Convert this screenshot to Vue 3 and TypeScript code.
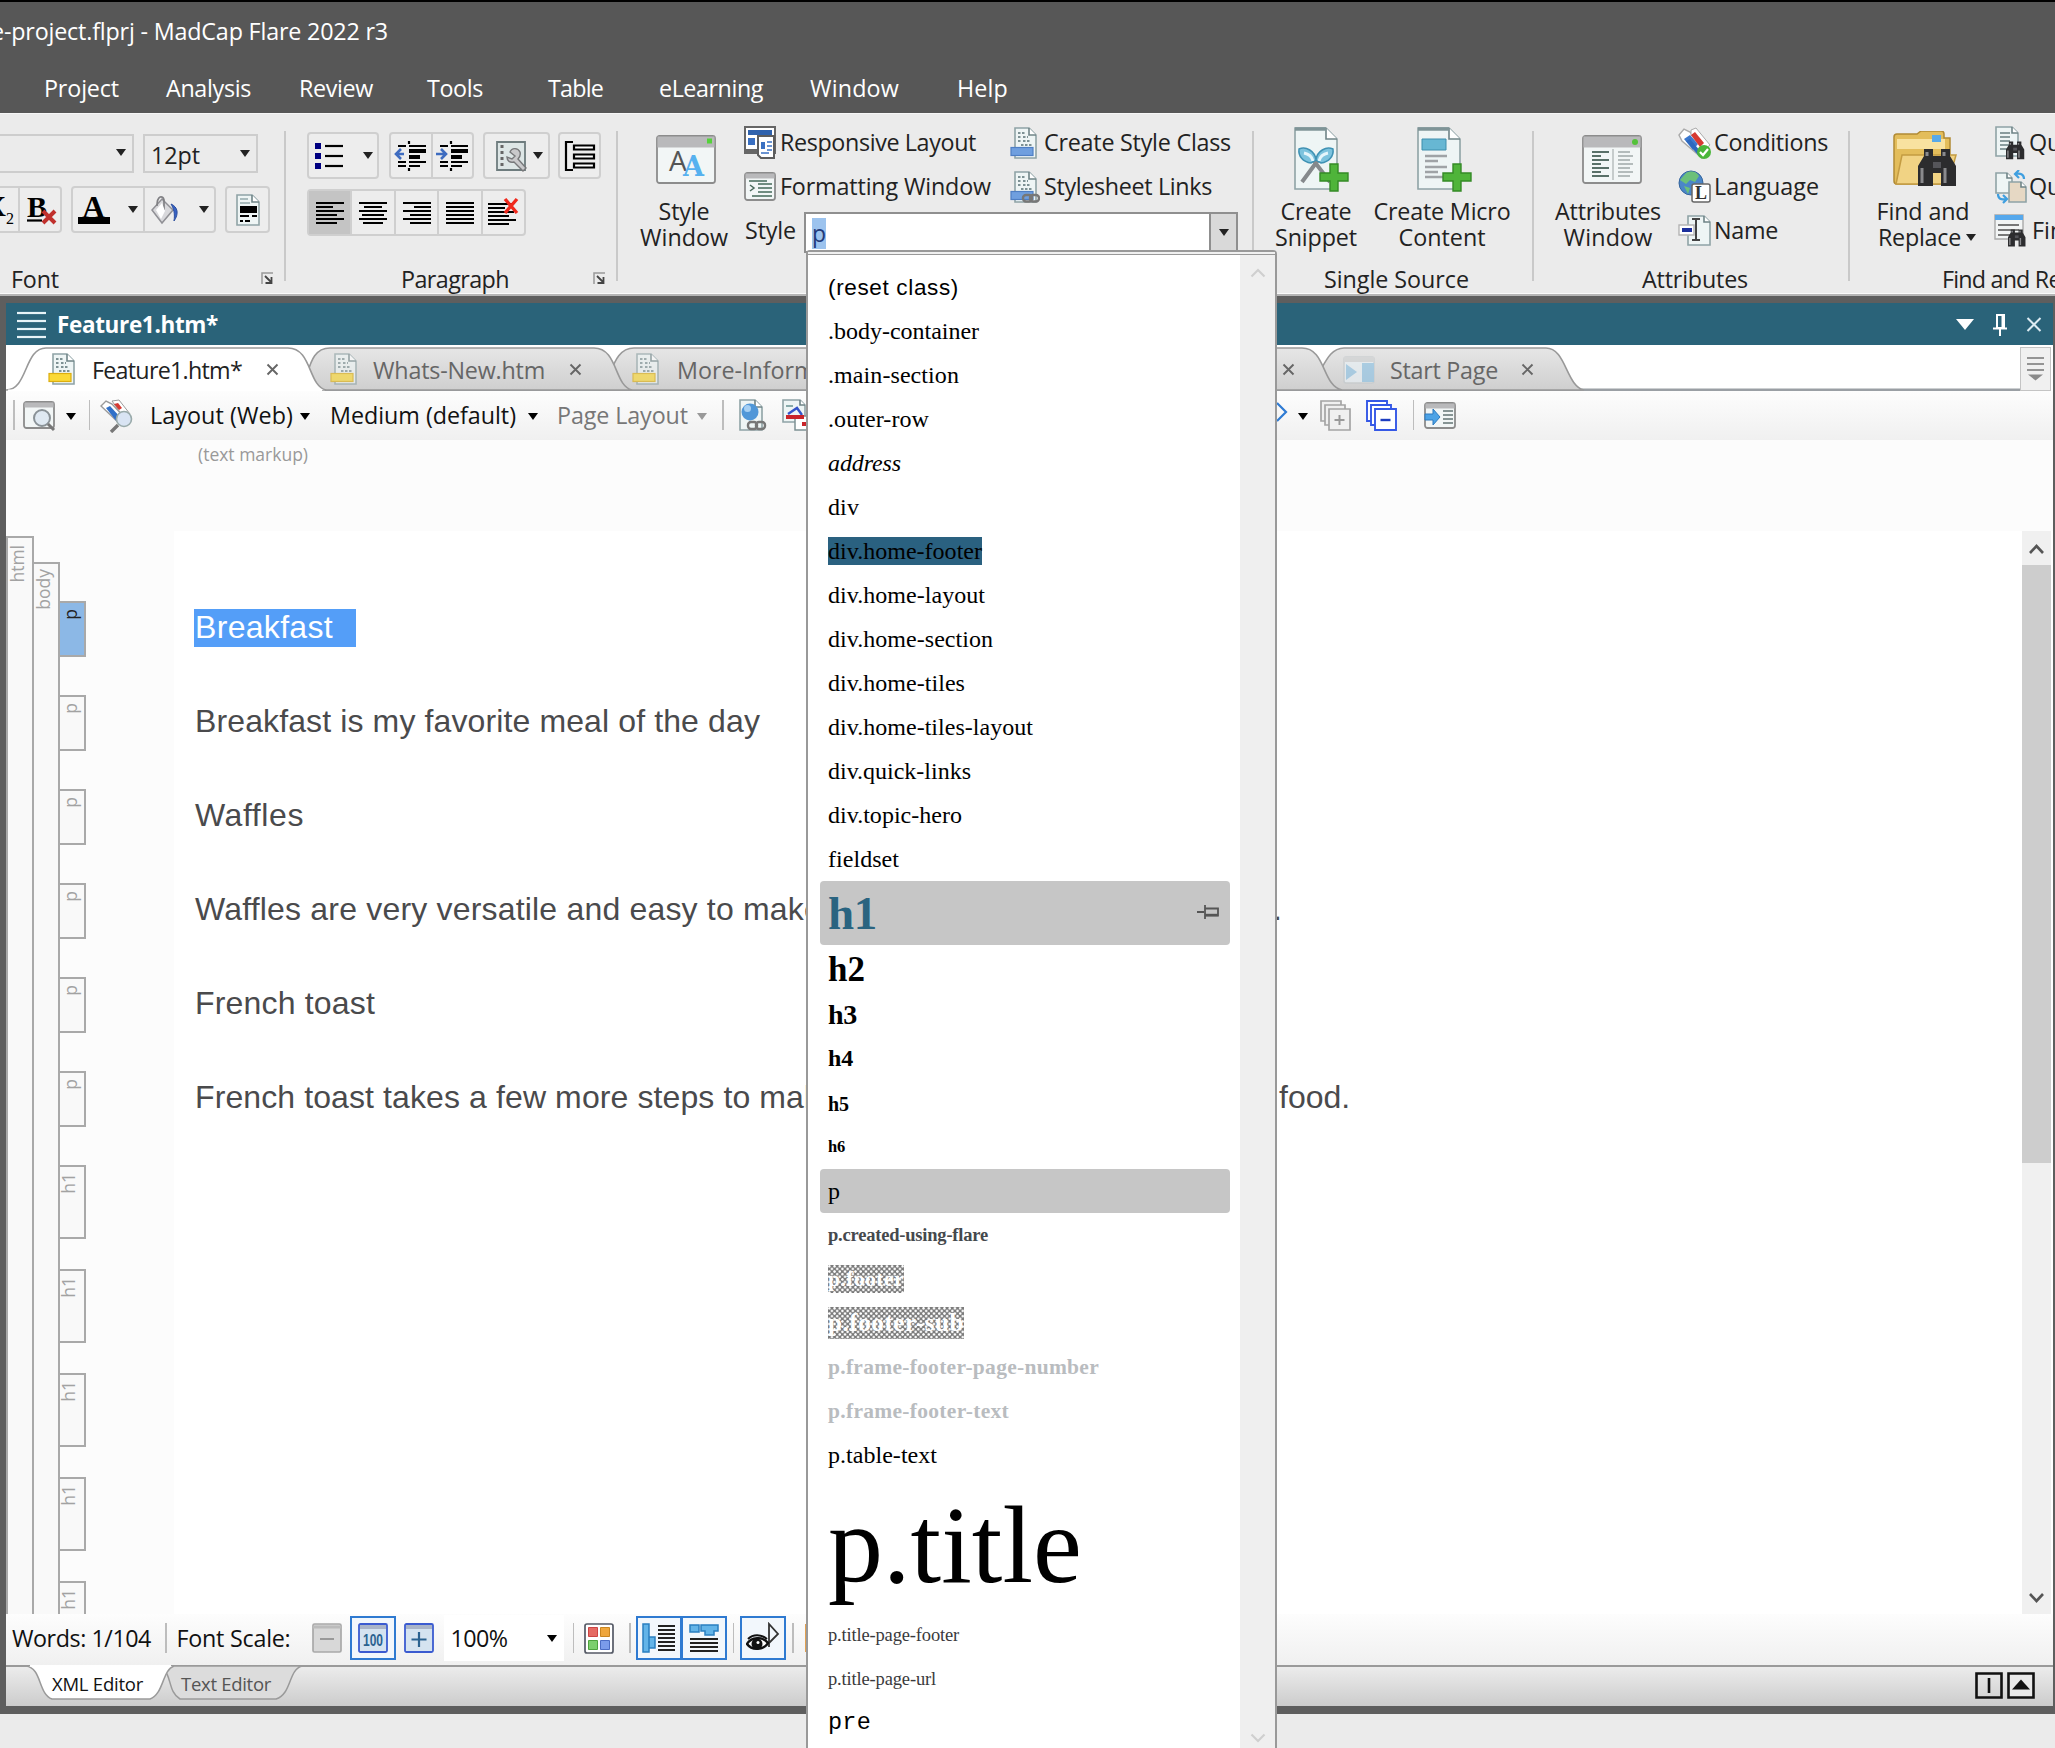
<script setup lang="ts">
import { h, type FunctionalComponent, type ObjectDirective } from 'vue'

type Glyph = { w: number; h: number; body: string }

const page = (x: number, y: number, w: number, ht: number, fold: number, fill = '#eef5f5') =>
  `<path d="M${x} ${y}h${w - fold}l${fold} ${fold}v${ht - fold}h${-w}z" fill="${fill}" stroke="#8fa3a6" stroke-width="1.6"/>` +
  `<path d="M${x + w - fold} ${y}v${fold}h${fold}" fill="#fff" stroke="#6f8487" stroke-width="1.6"/>`

const lines = (x: number, w: number, ys: number[], color: string, sw = 2) =>
  ys.map((y) => `<path d="M${x} ${y}h${w}" stroke="${color}" stroke-width="${sw}"/>`).join('')

const sheet = (band: string, edge: string) =>
  page(5, 1, 21, 30, 7) +
  `<path d="M8 6h8M8 10h3M13 10h5M8 14h3M13 14h8M11 18h11" stroke="#7d9194" stroke-width="1.8" stroke-dasharray="2.5 1.5"/>` +
  `<rect x="1" y="20.500" width="22" height="8" fill="${band}" stroke="${edge}" stroke-width="1.2"/>`

const win = (w: number, ht: number, bar: number) =>
  `<rect x="1" y="1" width="${w - 2}" height="${ht - 2}" rx="2.500" fill="#f2f6f6" stroke="#8c8c8c" stroke-width="1.8"/>` +
  `<rect x="1.500" y="1.500" width="${w - 3}" height="${bar}" fill="#b9b9bb"/>`

const binoculars = (x: number, y: number, s: number) =>
  `<g transform="translate(${x} ${y}) scale(${s})"><path d="M6 3h9v7h8V3h9v7l6 10v20H23V27h-8v13H0V20l6-10z" fill="#2c2c2e"/><path d="M4 22v15M27 22v15M9 6v4M26 6v4" stroke="#8a8a8d" stroke-width="3"/><path d="M15 16h8v6h-8z" fill="#55555a"/></g>`

const plus = (x: number, y: number) =>
  `<path transform="translate(${x} ${y})" d="M10 1h8v9h10v8H18v10h-8V18H0v-8h10z" fill="#4fb43a" stroke="#348a26" stroke-width="1.4"/>`

const bars = (rows: number[][]) =>
  rows.map(([x, w], i) => `<path d="M${x} ${2 + i * 4}h${w}" stroke="#000" stroke-width="2"/>`).join('')

const glyphs: Record<string, Glyph> = {
  sub: { w: 16, h: 34, body: `<text x="-15" y="23" font-family="Liberation Serif" font-weight="bold" font-size="29">X</text><text x="6" y="31" font-family="Liberation Serif" font-size="16">2</text>` },
  clear: { w: 30, h: 32, body: `<text x="0" y="23" font-family="Liberation Serif" font-weight="bold" font-size="30">B</text><path d="M0 26.500h15" stroke="#000" stroke-width="2.200"/><path d="M16 17l12 12M28 17L16 29" stroke="#c0302c" stroke-width="4"/>` },
  fontColor: { w: 34, h: 32, body: `<text x="5" y="24" font-family="Liberation Serif" font-weight="bold" font-size="32">A</text><path d="M1 23h32v7H1z"/>` },
  bucket: { w: 30, h: 30, body: `<path d="M3 15L13 4l11 11-11 13z" fill="#d9d9dc" stroke="#909095" stroke-width="1.500"/><path d="M8 11c0-11 6-11 7-6v10" fill="none" stroke="#808084" stroke-width="1.700"/><path d="M22 9c7 3 8 10 3 17 1-7 0-12-3-17z" fill="#3762c4" stroke="#2c4f9e"/><path d="M7 15l6-7 3 8-4 8z" fill="#fff"/>` },
  fontDoc: { w: 26, h: 34, body: page(2, 2, 22, 30, 7) + `<path d="M5 13h17v7H5z"/><path d="M5 6h8M5 10h10" stroke="#aabcbe" stroke-width="2"/><path d="M5 23h9M17 23h5M5 28h3M10 28h5" stroke="#000" stroke-width="2"/>` },
  bullets: { w: 30, h: 28, body: [3, 13, 23].map((y) => `<path d="M1 ${y - 2}h6v6H1z" fill="#000080"/><path d="M11 ${y + 1}h18" stroke="#000" stroke-width="2.200"/>`).join('') },
  outdent: { w: 33, h: 32, body: `<path d="M4 6h8M15 6h17M15 22h17M4 22h8M4 26h8M15 26h11M15 1v3M15 28v3" stroke="#000" stroke-width="2.200"/><path d="M15 11h17M15 17h11" stroke="#000" stroke-width="4"/><path d="M10 14H3M7 9l-5 5 5 5" fill="none" stroke="#3e6cc0" stroke-width="2.600"/>` },
  indent: { w: 33, h: 32, body: `<path d="M4 6h8M15 6h17M15 22h17M4 22h8M4 26h8M15 26h11M15 1v3M15 28v3" stroke="#000" stroke-width="2.200"/><path d="M15 11h17M15 17h11" stroke="#000" stroke-width="4"/><path d="M0 14h9M5 9l5 5-5 5" fill="none" stroke="#3e6cc0" stroke-width="2.600"/>` },
  wrench: { w: 32, h: 32, body: `<path d="M2 2h28v28H2z" fill="#dde6e6" stroke="#6e7c7e" stroke-width="1.800"/><path d="M7 5v22" stroke="#666" stroke-width="3" stroke-dasharray="3 3"/><path d="M15 12c2-5 8-4 10 0 1 4-1 6-2 7l8 9-3 3-9-9c-4 1-7-1-7-5l5 2 3-3z" fill="#c9c9cb" stroke="#77787a" stroke-width="1.400"/>` },
  bracket: { w: 32, h: 32, body: `<path d="M9 2H2v28h7" fill="none" stroke="#000" stroke-width="2.200"/><path d="M10 5.500h20v4H10zM10 14.500h20v4H10zM10 23.500h20v4H10z" fill="#fff" stroke="#000" stroke-width="2.200"/>` },
  alignLeft: { w: 30, h: 24, body: bars([[1, 28], [1, 17], [1, 28], [1, 21], [1, 28], [1, 21]]) },
  alignCenter: { w: 30, h: 24, body: bars([[1, 28], [6, 18], [1, 28], [4, 22], [1, 28], [5, 20]]) },
  alignRight: { w: 30, h: 24, body: bars([[1, 28], [12, 17], [1, 28], [8, 21], [1, 28], [8, 21]]) },
  justify: { w: 30, h: 24, body: bars([[1, 28], [1, 28], [1, 28], [1, 28], [1, 28], [1, 28]]) },
  alignClear: { w: 32, h: 32, body: `<g transform="translate(0 5)">${bars([[1, 26], [1, 17], [1, 26], [1, 21], [1, 28], [1, 21]])}</g><path d="M18 2l12 14M30 2L18 16" stroke="#f0281c" stroke-width="3.400"/>` },
  launcher: { w: 13, h: 13, body: `<path d="M1 12V1h11" fill="none" stroke="#999" stroke-width="1.500"/><path d="M4 4l6 6M10.500 5v6H4.500" fill="none" stroke="#444" stroke-width="1.800"/>` },
  styleWindow: { w: 60, h: 50, body: win(60, 49, 11) + `<path d="M51 3.500h5v5h-5z" fill="#54d23a"/><text x="13" y="36" font-family="Open Sans" font-size="28" fill="#555">A</text><text x="27" y="41" font-family="DejaVu Serif" font-weight="bold" font-size="27" fill="#56b1ef">A</text>` },
  responsive: { w: 32, h: 34, body: `<path d="M1 1h30v26H1z" fill="#fff" stroke="#666" stroke-width="2"/><path d="M4 4h24v5H4z" fill="#2f62ad"/><path d="M4 12h7v7H4z" fill="#3a70c2"/><path d="M1 23h12v5H1z" fill="#666"/><path d="M14 10h16v22H17l-3-3z" fill="#fff" stroke="#5d5d5d" stroke-width="2"/><path d="M17 16h4v7h-4z" fill="#3a70c2"/><path d="M23 16h5M23 20h5M23 24h5M17 27h8" stroke="#3a70c2" stroke-width="1.600"/>` },
  formatting: { w: 32, h: 30, body: win(32, 29, 5) + lines(14, 14, [12, 16, 20], '#6f8c80') + `<path d="M5 9h18M8 24h20" stroke="#6f8c80" stroke-width="2"/><path d="M6 13l4 3-4 3" fill="none" stroke="#4a6a5c" stroke-width="1.500"/>` },
  styleClass: { w: 29, h: 33, body: sheet('#6f9fdf', '#4f7fc4') },
  styleLinks: { w: 30, h: 33, body: sheet('#6f9fdf', '#4f7fc4') + `<g fill="none" stroke="#777" stroke-width="2.400"><rect x="13" y="24" width="9" height="6.500" rx="3"/><rect x="20" y="24" width="9" height="6.500" rx="3"/></g>` },
  snippet: { w: 56, h: 66, body: page(2, 1, 42, 61, 11) + `<path d="M2 2h31" stroke="#7f9497" stroke-width="3.500"/><path d="M9 55L31 25M37 55L14 25" stroke="#85898c" stroke-width="4"/><path d="M6 22c7-3 16 2 17 11l-5 3c-8-1-13-7-12-14zM40 22c-7-3-16 2-17 11l5 3c8-1 13-7 12-14z" fill="#7cc3de" stroke="#3f92b4" stroke-width="1.500"/><path d="M11 26c5 1 8 4 9 8M35 26c-5 1-8 4-9 8" stroke="#e4f5fb" stroke-width="3" fill="none"/>` + plus(27, 36) },
  micro: { w: 56, h: 66, body: page(2, 1, 42, 61, 11) + `<path d="M2 2h31" stroke="#7f9497" stroke-width="3.500"/><path d="M6 12h24v11H6z" fill="#67b7d3" stroke="#3e8eac"/>` + lines(9, 22, [29, 40, 50], '#9fa3a6', 2.5) + lines(9, 13, [34, 45], '#9fa3a6', 2.5) + plus(27, 36) },
  attributes: { w: 60, h: 50, body: win(60, 49, 11) + `<circle cx="53" cy="7" r="3" fill="#54c23a"/><path d="M31 14v31" stroke="#c6cccc" stroke-width="2"/>` + lines(10, 17, [17, 25, 33, 41], '#597068') + lines(10, 9, [21, 29, 37], '#597068') + lines(36, 12, [17, 25, 33, 41], '#b4bcbc') + lines(36, 15, [21, 29, 37], '#b4bcbc') },
  conditions: { w: 34, h: 33, body: `<path d="M1 8l5-6 6 3 18 20-6 6L4 14z" fill="#fff" stroke="#aaa" stroke-width="1.400"/><path d="M6 12l6-4 8 9-5 6z" fill="#3b78cf"/><path d="M13 3l5-2 14 17-6 5-13-15z" fill="#fff" stroke="#aaa"/><path d="M17 5l9 11-4 4-9-12z" fill="#d63a32"/><path d="M8 14l12 14 3-3L12 12z" fill="#2e68bd"/><circle cx="26" cy="25" r="7" fill="#4ab53a"/><path d="M22 25l3 3 5-6" fill="none" stroke="#fff" stroke-width="2.200"/>` },
  language: { w: 34, h: 34, body: `<circle cx="13" cy="13" r="12" fill="#4a86c8" stroke="#35659d"/><path d="M8 3c6-3 11-1 13 3l-4 6-5-2-4 4-6-4z" fill="#6cc07a"/><path d="M6 16l6 2-2 6z" fill="#6cc07a"/><rect x="14" y="14" width="18" height="18" rx="2" fill="#fff" stroke="#666" stroke-width="1.500"/><text x="17" y="29" font-family="Liberation Serif" font-size="18" font-weight="bold" fill="#333">L</text>` },
  name: { w: 34, h: 34, body: page(10, 2, 22, 29, 6) + `<path d="M1 11h15v10H1z" fill="#fff" stroke="#b5b5b5" stroke-width="1.400"/><path d="M4 14h10v4H4z" fill="#1c2f9c"/><path d="M14 5h8M14 26h8M18 5v21" stroke="#444" stroke-width="2"/>` },
  find: { w: 68, h: 58, body: `<path d="M2 6q0-3 3-3h20l4-3h20q3 0 3 3v4h6v46H5q-3 0-3-3z" fill="#e3bd5b" stroke="#b18a34" stroke-width="1.500"/><path d="M5 8h48v10H5z" fill="#f8e2a0"/><path d="M40 4h9v7h-9z" fill="#58a9e8"/><path d="M10 24h54l-8 29H4z" fill="#f1d384" stroke="#c49c42" stroke-width="1.500"/>` + binoculars(26, 15, 1) },
  quickDoc: { w: 32, h: 34, body: page(2, 1, 22, 29, 6) + lines(6, 10, [7, 11, 15, 19, 23], '#8a9c9e') + binoculars(12, 14, 0.48) },
  quickSwap: { w: 34, h: 34, body: page(2, 3, 16, 20, 5) + page(15, 12, 17, 20, 5, '#e6d8c4') + `<path d="M30 9c0-5-4-6-8-5M25 0l-4 4 4 4M4 24c0 5 3 6 8 5M9 25l4 4-4 4" fill="none" stroke="#3f9fe0" stroke-width="2.200"/>` },
  findList: { w: 34, h: 34, body: `<path d="M1 1h28v24H1z" fill="#f2f4f4" stroke="#a9a9a9" stroke-width="1.400"/><path d="M1 1h28v5H1z" fill="#56a8ec"/>` + lines(4, 21, [11, 16, 21], '#777') + binoculars(14, 14, 0.46) },
  htm: { w: 28, h: 33, body: sheet('#fbd936', '#dcae10') },
  startPage: { w: 32, h: 28, body: `<rect x="1" y="1" width="30" height="26" rx="2" fill="#e9f1f6" stroke="#c3c9cc" stroke-width="1.500"/><path d="M1 1h30v5H1z" fill="#cfd1d2"/><path d="M19 7h12v19H19zM3 8v16l11-8z" fill="#8fc3e4"/>` },
  preview: { w: 33, h: 31, body: win(32, 28, 5) + `<circle cx="19" cy="17" r="8" fill="#dfe9f2" stroke="#8a9297" stroke-width="2"/><path d="M25 23l6 6" stroke="#777" stroke-width="3"/>` },
  tagFind: { w: 34, h: 34, body: `<path d="M1 7l5-5 6 3 14 15-5 6z" fill="#fff" stroke="#9a9a9a" stroke-width="1.400"/><path d="M12 2l7-1 11 14-5 5z" fill="#fff" stroke="#9a9a9a"/><path d="M6 9l4-2 11 12-4 4z" fill="#3070c8"/><path d="M14 5l5 6 3-2-4-5z" fill="#d63a32"/><circle cx="24" cy="20" r="7.500" fill="#d9e4f3" stroke="#9aa" stroke-width="1.600"/><path d="M18 26l-7 7" stroke="#777" stroke-width="3.400"/>` },
  linkGlobe: { w: 29, h: 33, body: page(2, 1, 22, 30, 7) + `<circle cx="12" cy="13" r="8.500" fill="#4f97d8"/><circle cx="9.500" cy="9.500" r="3.500" fill="#a6d0f3"/><g fill="none" stroke="#777" stroke-width="2.400"><rect x="10" y="23" width="9" height="7" rx="3"/><rect x="18" y="23" width="9" height="7" rx="3"/></g>` },
  redline: { w: 30, h: 33, body: page(2, 1, 22, 22, 5) + `<path d="M14 17h18v14H14z" fill="#fff" stroke="#7e9194" stroke-width="1.500"/><path d="M5 7h7" stroke="#8aa" stroke-width="2"/><path d="M7 15l9-6 5 7" fill="none" stroke="#3353c8" stroke-width="2.400"/><path d="M5 16h18v4H5zM21 23h6v4h-6z" fill="#c9242a"/>` },
  tagEnd: { w: 12, h: 20, body: `<path d="M1 1l9 9-9 9" fill="none" stroke="#2f7bd3" stroke-width="2.200"/>` },
  expand: { w: 32, h: 32, body: `<g fill="#f0f0f0" stroke="#a4a4a4" stroke-width="1.700"><path d="M1 1h20v20H1z"/><path d="M5 5h20v20H5z"/><path d="M9 9h21v21H9z"/></g><path d="M14.500 20h10M19.500 15v10" stroke="#999" stroke-width="2"/>` },
  collapse: { w: 32, h: 32, body: `<g fill="#fff" stroke="#3558e6" stroke-width="1.900"><path d="M1 1h20v20H1z"/><path d="M5 5h20v20H5z"/><path d="M9 9h21v21H9z"/></g><path d="M14.500 20h10" stroke="#1d3dc0" stroke-width="2.400"/>` },
  insert: { w: 33, h: 28, body: win(32, 27, 5) + lines(19, 10, [9, 13, 17, 21], '#7a8a8a', 1.8) + `<path d="M1 12h8V7l7 8-7 8v-5H1z" fill="#4da3e6" stroke="#2c7bc0"/>` },
  menu: { w: 30, h: 28, body: lines(0, 29, [2, 10, 18, 26], '#e8f4f8', 2.2) },
  pinUp: { w: 14, h: 22, body: `<path d="M4 1h7v13H4zM0 14.500h14M7 15v7" fill="none" stroke="#fff" stroke-width="2"/><path d="M9.500 1v13" stroke="#fff" stroke-width="2"/>` },
  pinSide: { w: 22, h: 16, body: `<path d="M0 8h7M8 1v14M8 4.500h13v7H8" fill="none" stroke="#555" stroke-width="1.800"/><path d="M8 11h13" stroke="#555" stroke-width="2.400"/>` },
  winClose: { w: 16, h: 15, body: `<path d="M1.500 1l13 13M14.500 1l-13 13" stroke="#dcebf2" stroke-width="2"/>` },
  close: { w: 13, h: 13, body: `<path d="M1.500 1.500l10 10M11.500 1.500l-10 10" stroke="#666" stroke-width="1.900"/>` },
  winArrow: { w: 18, h: 11, body: `<path d="M0 0h18l-9 11z" fill="#fff"/>` },
  tabMenu: { w: 18, h: 26, body: lines(0, 17, [2, 8, 14], '#8a8a8a', 1.8) + `<path d="M1 18.500h15l-7.500 6z" fill="#8a8a8a"/>` },
  scaleDown: { w: 30, h: 30, body: `<rect x="1" y="1" width="28" height="28" rx="1.500" fill="#d8d8d8" stroke="#a9a9a9" stroke-width="1.700"/><path d="M1 4h28" stroke="#bbb" stroke-width="3"/><path d="M8 16h14" stroke="#999" stroke-width="2"/>` },
  scale100: { w: 30, h: 30, body: `<rect x="1" y="1" width="28" height="28" rx="1.500" fill="#d5e3f0" stroke="#3b5bd0" stroke-width="1.800"/><path d="M2 4h26" stroke="#a9b4c8" stroke-width="4"/><text x="5" y="23" font-family="Liberation Sans" font-weight="bold" font-size="16" textLength="20" lengthAdjust="spacingAndGlyphs" fill="#2b6290">100</text>` },
  scaleUp: { w: 30, h: 30, body: `<rect x="1" y="1" width="28" height="28" rx="1.500" fill="#d5e3f0" stroke="#3b5bd0" stroke-width="1.800"/><path d="M2 4h26" stroke="#a9b4c8" stroke-width="4"/><path d="M7.500 16.500h15M15 9v15" stroke="#2b6290" stroke-width="2.200"/>` },
  palette: { w: 30, h: 31, body: `<rect x="1" y="1" width="28" height="29" rx="2" fill="#fff" stroke="#555a66" stroke-width="1.700"/><path d="M4.500 4.500h9v9h-9z" fill="#e56a63" stroke="#c44"/><path d="M16.500 4.500h9v9h-9z" fill="#efa63c" stroke="#c98520"/><path d="M4.500 17.500h9v9h-9z" fill="#7ccf6c" stroke="#4da33c"/><path d="M16.500 17.500h9v9h-9z" fill="#7a9bea" stroke="#4a6cc4"/>` },
  blockBars: { w: 33, h: 30, body: `<path d="M1 1h6v28H1zM7 14h6v11H7z" fill="#63b4e8" stroke="#2a7fc0" stroke-width="1.500"/>` + lines(16, 17, [3, 7, 11, 15, 19, 23, 27], '#222', 2) },
  spanBars: { w: 30, h: 30, body: `<path d="M1 2h9v7H1zM12 2h17v6h-4v4h-9V8h-4z" fill="#63b4e8" stroke="#2a7fc0" stroke-width="1.500"/>` + lines(1, 28, [16, 20, 24, 28], '#222', 2) },
  markers: { w: 34, h: 32, body: `<path d="M23 25V2l9 10-9 9" fill="none" stroke="#333" stroke-width="1.800"/><path d="M1 22c4-7 16-8 21-1-4 7-16 8-21 1z" fill="#fff" stroke="#111" stroke-width="2.400"/><circle cx="11" cy="22" r="5.500" fill="#111"/><path d="M2 17c5-5 13-5 19 0" fill="none" stroke="#111" stroke-width="2"/><circle cx="12" cy="20.500" r="1.500" fill="#fff"/>` },
  split: { w: 28, h: 27, body: `<path d="M1.500 1.500h25v24h-25z" fill="none" stroke="#111" stroke-width="2.600"/><path d="M14 6v15" stroke="#111" stroke-width="2.600"/>` },
  raise: { w: 28, h: 27, body: `<path d="M1.500 1.500h25v24h-25z" fill="#e8e8e8" stroke="#111" stroke-width="2.600"/><path d="M5 17.500l9-10 9 10z" fill="#111"/>` },
}

const Glyph: FunctionalComponent<{ name: string }> = (props) => {
  const g = glyphs[props.name]
  return h('svg', { width: g.w, height: g.h, viewBox: `0 0 ${g.w} ${g.h}`, style: 'flex:none;display:block', innerHTML: g.body })
}
Glyph.props = ['name']

/* Spaces the letters of a label so that it fills the given width. */
const vFit: ObjectDirective<HTMLElement, number> = {
  mounted(el, { value }) {
    const count = (el.textContent ?? '').length
    el.style.letterSpacing = `${(value - el.getBoundingClientRect().width) / count}px`
  },
}

const menus = [
  { label: 'Project', width: 75, gap: 44 },
  { label: 'Analysis', width: 85, gap: 47 },
  { label: 'Review', width: 74, gap: 48 },
  { label: 'Tools', width: 56, gap: 54 },
  { label: 'Table', width: 55, gap: 65 },
  { label: 'eLearning', width: 104, gap: 56 },
  { label: 'Window', width: 89, gap: 47 },
  { label: 'Help', width: 51, gap: 58 },
]

const aligns = ['alignLeft', 'alignCenter', 'alignRight', 'justify', 'alignClear']

const tags = [
  ...[0, 1, 2, 3, 4, 5].map((i) => ({ label: 'p', height: 56, gap: i === 0 ? 161 : 38, on: i === 0 })),
  ...[0, 1, 2, 3, 4].map((i) => ({ label: 'h1', height: 74, gap: i === 0 ? 38 : 30, on: false })),
]

const paragraphs = [
  { text: 'Breakfast', width: 138, on: true },
  { text: 'Breakfast is my favorite meal of the day', width: 565 },
  { text: 'Waffles', width: 109 },
  { text: 'Waffles are very versatile and easy to make', width: 627, tail: '.' },
  { text: 'French toast', width: 180 },
  { text: 'French toast takes a few more steps to make', width: 643, tail: 'food.' },
]

type Style = { name: string; width: number; kind?: string; box?: boolean; pin?: boolean }
const styles: Style[] = [
  { name: '(reset class)', width: 131, kind: 'reset' },
  { name: '.body-container', width: 151 },
  { name: '.main-section', width: 131 },
  { name: '.outer-row', width: 101 },
  { name: 'address', width: 73, kind: 'italic' },
  { name: 'div', width: 31 },
  { name: 'div.home-footer', width: 154, kind: 'filled' },
  { name: 'div.home-layout', width: 157 },
  { name: 'div.home-section', width: 165 },
  { name: 'div.home-tiles', width: 137 },
  { name: 'div.home-tiles-layout', width: 205 },
  { name: 'div.quick-links', width: 143 },
  { name: 'div.topic-hero', width: 134 },
  { name: 'fieldset', width: 71 },
  { name: 'h1', width: 49, kind: 'h1', box: true, pin: true },
  { name: 'h2', width: 37, kind: 'h2' },
  { name: 'h3', width: 29, kind: 'h3' },
  { name: 'h4', width: 25, kind: 'h4' },
  { name: 'h5', width: 21, kind: 'h5' },
  { name: 'h6', width: 17, kind: 'h6' },
  { name: 'p', width: 12, box: true },
  { name: 'p.created-using-flare', width: 160, kind: 'created' },
  { name: 'p.footer', width: 76, kind: 'check' },
  { name: 'p.footer-sub', width: 136, kind: 'check large' },
  { name: 'p.frame-footer-page-number', width: 271, kind: 'faint' },
  { name: 'p.frame-footer-text', width: 181, kind: 'faint' },
  { name: 'p.table-text', width: 109 },
  { name: 'p.title', width: 254, kind: 'title' },
  { name: 'p.title-page-footer', width: 131, kind: 'small' },
  { name: 'p.title-page-url', width: 108, kind: 'small' },
  { name: 'pre', width: 43, kind: 'mono' },
]
</script>

<template>
  <div class="app">
    <header class="titlebar">
      <div class="caption"><span v-fit="397">e-project.flprj - MadCap Flare 2022 r3</span></div>
      <nav class="menus">
        <span v-for="m in menus" :key="m.label" :style="{ marginLeft: m.gap + 'px', width: m.width + 'px' }"><span v-fit="m.width">{{ m.label }}</span></span>
      </nav>
    </header>

    <section class="ribbon">
      <div class="group font">
        <div class="body">
          <div class="row">
            <div class="combo family"><i class="arrow"></i></div>
            <div class="combo size"><span v-fit="49">12pt</span><i class="arrow"></i></div>
          </div>
          <div class="row second">
            <div class="btns edge"><div class="cell k"><Glyph name="sub" /></div><div class="cell b"><Glyph name="clear" /></div></div>
            <div class="btns color"><div class="cell"><Glyph name="fontColor" /><i class="arrow"></i></div><div class="cell"><Glyph name="bucket" /><i class="arrow"></i></div></div>
            <div class="btns doc"><div class="cell"><Glyph name="fontDoc" /></div></div>
          </div>
        </div>
        <div class="label"><span v-fit="48">Font</span><Glyph name="launcher" /></div>
      </div>
      <i class="sep"></i>
      <div class="group para">
        <div class="body">
          <div class="row">
            <div class="btns list"><div class="cell"><Glyph name="bullets" /><i class="arrow"></i></div></div>
            <div class="btns dents"><div class="cell"><Glyph name="outdent" /></div><div class="cell"><Glyph name="indent" /></div></div>
            <div class="btns tool"><div class="cell"><Glyph name="wrench" /><i class="arrow"></i></div></div>
            <div class="btns brk"><div class="cell"><Glyph name="bracket" /></div></div>
          </div>
          <div class="row second">
            <div class="btns aligns"><div v-for="(a, i) in aligns" :key="a" class="cell" :class="{ on: i === 0 }"><Glyph :name="a" /></div></div>
          </div>
        </div>
        <div class="label"><span v-fit="108">Paragraph</span><Glyph name="launcher" /></div>
      </div>
      <i class="sep"></i>
      <div class="group styles">
        <div class="big"><div class="art"><Glyph name="styleWindow" /></div><span v-fit="51">Style</span><span v-fit="88">Window</span></div>
        <div class="side">
          <div class="line">
            <div class="item first"><i class="ico"><Glyph name="responsive" /></i><span v-fit="196">Responsive Layout</span></div>
            <div class="item"><i class="ico"><Glyph name="styleClass" /></i><span v-fit="187">Create Style Class</span></div>
          </div>
          <div class="line">
            <div class="item first"><i class="ico"><Glyph name="formatting" /></i><span v-fit="211">Formatting Window</span></div>
            <div class="item"><i class="ico"><Glyph name="styleLinks" /></i><span v-fit="168">Stylesheet Links</span></div>
          </div>
          <div class="line">
            <div class="stylelabel"><span v-fit="51">Style</span></div>
            <div class="stylebox"><mark>p</mark><b><i class="arrow"></i></b></div>
          </div>
        </div>
      </div>
      <i class="sep"></i>
      <div class="group single">
        <div class="body bigs">
          <div class="big one"><div class="art tall"><Glyph name="snippet" /></div><span v-fit="71">Create</span><span v-fit="82">Snippet</span></div>
          <div class="big two"><div class="art tall"><Glyph name="micro" /></div><span v-fit="137">Create Micro</span><span v-fit="87">Content</span></div>
        </div>
        <div class="label"><span v-fit="145">Single Source</span></div>
      </div>
      <i class="sep"></i>
      <div class="group attrs">
        <div class="body bigs">
          <div class="big"><div class="art shift"><Glyph name="attributes" /></div><span v-fit="106">Attributes</span><span v-fit="89">Window</span></div>
          <div class="side">
            <div class="item"><i class="ico"><Glyph name="conditions" /></i><span v-fit="114">Conditions</span></div>
            <div class="item"><i class="ico"><Glyph name="language" /></i><span v-fit="105">Language</span></div>
            <div class="item"><i class="ico"><Glyph name="name" /></i><span v-fit="64">Name</span></div>
          </div>
        </div>
        <div class="label"><span v-fit="106">Attributes</span></div>
      </div>
      <i class="sep"></i>
      <div class="group finds">
        <div class="body bigs">
          <div class="big"><div class="art folder"><Glyph name="find" /></div><span v-fit="93">Find and</span><div class="more"><span v-fit="83">Replace</span><i class="arrow"></i></div></div>
          <div class="side">
            <div class="item"><i class="ico"><Glyph name="quickDoc" /></i><span>Quick Find</span></div>
            <div class="item"><i class="ico"><Glyph name="quickSwap" /></i><span>Quick Replace</span></div>
            <div class="item"><i class="ico"><Glyph name="findList" /></i><span class="in">Find Results</span></div>
          </div>
        </div>
        <div class="label"><span v-fit="172">Find and Replace</span></div>
      </div>
    </section>

    <section class="frame">
      <div class="dochead">
        <Glyph name="menu" />
        <span v-fit="161">Feature1.htm*</span>
        <div class="winbtns"><Glyph name="winArrow" /><Glyph name="pinUp" /><Glyph name="winClose" /></div>
      </div>

      <div class="tabs">
        <svg class="shapes" width="2047" height="46" viewBox="6 345 2047 46">
          <defs><linearGradient id="tabfill" x1="0" y1="0" x2="0" y2="1"><stop offset="0" stop-color="#e6e6e6" /><stop offset="1" stop-color="#cfcfcf" /></linearGradient></defs>
          <path d="M325 390H2021" stroke="#9a9fa4" stroke-width="3" />
          <g fill="url(#tabfill)" stroke="#999" stroke-width="1.600">
            <path d="M1300 390C1322 386 1322 348 1344 348H1546C1566 348 1566 386 1584 390Z" />
            <path d="M860 390C880 386 880 348 900 348H1302C1326 348 1322 386 1342 390Z" />
            <path d="M600 390C612 380 612 348 634 348H900V390Z" />
            <path d="M300 390C310 376 308 348 330 348H594C618 348 614 386 632 390Z" />
          </g>
          <path d="M6 390C28 390 24 348 46 348H288C312 348 308 386 326 390" fill="#fff" stroke="#999" stroke-width="1.600" />
          <path d="M8 390.500H322" stroke="#fff" stroke-width="2" />
        </svg>
        <div class="tab t1"><Glyph name="htm" /><span v-fit="150">Feature1.htm*</span><Glyph name="close" /></div>
        <div class="tab t2"><Glyph name="htm" /><span v-fit="172">Whats-New.htm</span><Glyph name="close" /></div>
        <div class="tab t3"><Glyph name="htm" /><span v-fit="194">More-Information</span></div>
        <div class="tab t4"><Glyph name="close" /></div>
        <div class="tab t5"><Glyph name="startPage" /><span v-fit="108">Start Page</span><Glyph name="close" /></div>
        <div class="tabmenu"><Glyph name="tabMenu" /></div>
      </div>

      <div class="toolbar">
        <i class="bar first"></i>
        <Glyph name="preview" class="m-preview" /><i class="arrow"></i>
        <i class="bar m-bar2"></i>
        <Glyph name="tagFind" class="m-tag" />
        <span v-fit="143" class="m-layout">Layout (Web)</span><i class="arrow"></i>
        <span v-fit="186" class="m-medium">Medium (default)</span><i class="arrow"></i>
        <span v-fit="131" class="m-page">Page Layout</span><i class="arrow dim"></i>
        <i class="bar m-bar3"></i>
        <Glyph name="linkGlobe" class="m-globe" />
        <Glyph name="redline" class="m-red" />
        <div class="tools2">
          <Glyph name="tagEnd" /><i class="arrow"></i>
          <Glyph name="expand" class="m-expand" /><Glyph name="collapse" class="m-collapse" />
          <i class="bar m-bar4"></i>
          <Glyph name="insert" class="m-insert" />
        </div>
      </div>

      <div class="editor">
        <div class="rail html"><span>html</span></div>
        <div class="rail bodytag"><span>body</span></div>
        <div class="tags">
          <div v-for="(t, i) in tags" :key="i" class="tag" :class="{ on: t.on, head: t.label === 'h1' }" :style="{ height: t.height + 'px', marginTop: t.gap + 'px' }"><span>{{ t.label }}</span></div>
        </div>
        <div class="canvas">
          <div class="markup"><span v-fit="110">(text markup)</span></div>
          <div class="sheetrow">
            <div class="sheet">
              <p v-for="(p, i) in paragraphs" :key="i"><span class="copy" :class="{ on: p.on }"><span v-fit="p.width">{{ p.text }}</span></span><span v-if="p.tail" class="tail" :class="{ dot: p.tail === '.' }">{{ p.tail }}</span></p>
            </div>
            <div class="scroll">
              <svg width="17" height="12" viewBox="0 0 17 12"><path d="M2 10l6.500-7 6.500 7" fill="none" stroke="#555" stroke-width="2.600" /></svg>
              <div class="thumb"></div>
              <svg class="down" width="17" height="12" viewBox="0 0 17 12"><path d="M2 2l6.500 7 6.500-7" fill="none" stroke="#555" stroke-width="2.600" /></svg>
            </div>
          </div>
        </div>
      </div>

      <div class="status">
        <span v-fit="139" class="words">Words: 1/104</span>
        <i class="bar s1"></i>
        <span v-fit="114" class="scale">Font Scale:</span>
        <Glyph name="scaleDown" class="s-down" />
        <div class="toggle w100"><Glyph name="scale100" /></div>
        <Glyph name="scaleUp" class="s-up" />
        <div class="zoom"><span v-fit="57">100%</span><i class="arrow"></i></div>
        <i class="bar s2"></i>
        <Glyph name="palette" class="s-pal" />
        <i class="bar s3"></i>
        <div class="toggle s4"><Glyph name="blockBars" /></div>
        <div class="toggle s5"><Glyph name="spanBars" /></div>
        <i class="bar s6"></i>
        <div class="toggle s7"><Glyph name="markers" /></div>
        <i class="bar s8"></i>
        <i class="orange"></i>
      </div>

      <div class="modes">
        <svg class="shapes" width="320" height="41" viewBox="6 1665 320 41">
          <path d="M162 1666C172 1676 168 1692 180 1699H276C292 1694 288 1670 302 1666Z" fill="#dcdcdc" stroke="#9a9a9a" stroke-width="1.500" />
          <path d="M26 1666C42 1668 38 1694 52 1699H150C164 1694 162 1670 174 1666" fill="#fff" stroke="#9a9a9a" stroke-width="1.500" />
          <path d="M30 1665.500H171" stroke="#fff" stroke-width="2" />
        </svg>
        <span v-fit="91" class="xml">XML Editor</span>
        <span v-fit="90" class="text">Text Editor</span>
        <div class="corner"><Glyph name="split" /><Glyph name="raise" /></div>
      </div>
    </section>

    <div class="popup">
      <div class="lip"></div>
      <div class="inner">
        <ul>
          <li v-for="s in styles" :key="s.name" :class="[s.kind, { box: s.box }]"><span v-fit="s.width">{{ s.name }}</span><Glyph v-if="s.pin" name="pinSide" class="pin" /></li>
        </ul>
        <div class="rail2">
          <svg width="16" height="10" viewBox="0 0 16 10"><path d="M1.500 8.500L8 2l6.500 6.500" fill="none" stroke="#cfcfcf" stroke-width="2.200" /></svg>
          <svg width="16" height="10" viewBox="0 0 16 10"><path d="M1.500 1.500L8 8l6.500-6.500" fill="none" stroke="#cfcfcf" stroke-width="2.200" /></svg>
        </div>
      </div>
    </div>
  </div>
</template>

<style>
html, body { margin: 0; overflow: hidden; background: #ebebeb; }
</style>

<style scoped>
* { box-sizing: border-box; }
.app { position: relative; width: 2055px; height: 1748px; overflow: hidden; background: #ebebeb; font: 23.300px/26px "Open Sans", sans-serif; color: #222; }
span { white-space: nowrap; flex: none; }
i { font-style: normal; }
.arrow { flex: none; width: 0; height: 0; border: 5.500px solid transparent; border-top: 7px solid #222; border-bottom: 0; }

.titlebar { height: 113px; background: #575757; border-top: 2px solid #000; color: #fff; }
.caption { height: 56px; line-height: 58px; display: flex; }
.caption > span { margin-left: -9px; }
.menus { display: flex; line-height: 53px; padding-top: 4px; }
.menus > span { display: block; }

.ribbon { display: flex; height: 183px; border-top: 1px solid #f6f6f6; border-bottom: 2px solid #b5b5b5; background: #ebebeb; box-shadow: inset 0 -1px 0 #fafafa; }
.sep { flex: none; width: 2px; height: 150px; margin-top: 17px; background: #c9c9c9; }
.group { flex: none; display: flex; flex-direction: column; }
.body { height: 149px; }
.row { display: flex; }
.label { display: flex; height: 31px; line-height: 32px; }
.label svg { margin-top: 9px; }
.combo { display: flex; align-items: center; height: 39px; border: 2px solid #cdcdcd; }
.combo .arrow { margin-left: auto; margin-top: -2px; }
.btns { display: flex; height: 47px; border: 2px solid #cfcfcf; border-radius: 4px; background: #ededed; }
.cell { display: flex; align-items: center; justify-content: center; flex: 1; border-left: 2px solid #cfcfcf; }
.cell:first-child { border-left: 0; }
.cell.on { background: #c4c4c4; }

.font { width: 284px; }
.font .body { padding-top: 20px; }
.family { width: 134px; border-left: 0; padding-right: 6px; }
.size { width: 115px; margin-left: 9px; padding: 2px 6px 0 6px; }
.font .second { margin-top: 13px; }
.edge { width: 62px; border-left: 0; border-radius: 0 4px 4px 0; }
.edge .k { flex: none; width: 18px; justify-content: flex-start; }
.edge .b { padding-left: 3px; }
.color { width: 145px; margin-left: 9px; }
.color .arrow { margin-left: 17px; }
.color .cell + .cell .arrow { margin-left: 20px; }
.doc { width: 45px; margin-left: 9px; }
.font .label { padding-left: 11px; }
.font .label svg { margin-left: 202px; }

.para { width: 330px; padding-left: 21px; }
.para .body { padding-top: 18px; }
.list { width: 72px; }
.list .arrow { margin-left: 19px; }
.dents { width: 85px; margin-left: 10px; }
.tool { width: 67px; margin-left: 9px; }
.tool .arrow { margin-left: 6px; }
.tool .cell { padding-left: 4px; }
.brk { width: 43px; margin-left: 8px; }
.para .second { margin-top: 10px; }
.aligns { width: 219px; }
.para .label { padding-left: 94px; }
.para .label svg { margin-left: 84px; }

.big { flex: none; display: flex; flex-direction: column; align-items: center; }
.big .art { height: 84px; padding-top: 21px; }
.big .art.tall { padding-top: 13px; }
.big .art.folder { padding: 17px 0 0 5px; }
.big .art.shift { padding-left: 7px; }
.styles { flex-direction: row; width: 634px; padding-left: 19px; }
.styles .big { width: 94px; }
.styles .big .art { padding-left: 3px; }
.side { padding-top: 6px; }
.styles .side { margin-left: 13px; }
.line { display: flex; height: 44px; }
.item { display: flex; align-items: center; height: 44px; line-height: 44px; }
.ico { flex: none; width: 37px; padding-top: 2px; }
.item.first { width: 266px; }
.styles .item.first .ico { width: 36px; }
.styles .item:not(.first) .ico { width: 34px; }
.stylelabel { width: 60px; padding-left: 1px; line-height: 44px; }
.stylebox { display: flex; width: 434px; height: 41px; margin-top: 4px; padding-left: 6px; border: 2px solid #8f8f8f; background: #fff; }
.stylebox mark { height: 31px; margin-top: 4px; line-height: 31px; background: #9cc3ee; color: #223a7a; font-size: 23px; }
.stylebox b { display: flex; align-items: center; justify-content: center; width: 27px; margin-left: auto; border-left: 2px solid #8f8f8f; background: #d9d9d9; }
.bigs { display: flex; }
.single .one { width: 124px; }
.single .one .art { padding-left: 9px; }
.single .two { width: 120px; margin-left: 6px; }
.single .two span { margin-left: -4px; }
.single { width: 278px; }
.single .label { padding-left: 70px; }
.attrs { width: 314px; }
.attrs .big { width: 106px; margin-left: 21px; }
.attrs .side { margin-left: 17px; }
.attrs .ico { width: 36px; }
.attrs .label { padding-left: 108px; }
.finds { width: 205px; overflow: hidden; }
.finds .big { width: 106px; margin-left: 20px; }
.finds .side { margin-left: 18px; }
.finds .ico { width: 35px; }
.finds .item .in { margin-left: 3px; }
.more { display: flex; align-items: center; margin-left: 8px; gap: 5px; }
.finds .label { padding-left: 92px; }

.frame { height: 1418px; padding: 7px 2px 8px 6px; background: #5e5e5e; }
.dochead { display: flex; align-items: center; height: 42px; padding: 1px 11px 0 11px; background: #2a6379; color: #fff; font-size: 22.500px; font-weight: bold; }
.dochead span { margin-left: 10px; }
.winbtns { display: flex; align-items: center; gap: 19px; margin-left: auto; }
.tabs { position: relative; display: flex; height: 46px; background: #fff; }
.shapes { position: absolute; left: 0; top: 0; }
.tab { position: relative; display: flex; align-items: center; height: 46px; padding-top: 3px; flex: none; }
.t1 { width: 277px; padding-left: 42px; }
.t1 span { margin: 0 24px 0 16px; }
.t2 { width: 304px; padding-left: 47px; color: #666; }
.t2 span { margin: 0 24px 0 15px; }
.t3 { width: 600px; padding-left: 45px; color: #666; }
.t3 span { margin-left: 17px; }
.t4 { width: 108px; padding-left: 95px; }
.t5 { padding-left: 48px; color: #666; }
.t5 span { margin: 0 23px 0 15px; }
.t2 svg:first-child, .t3 svg, .t5 svg:first-child { opacity: .65; }
.tabmenu { position: relative; display: flex; align-items: center; justify-content: center; width: 31px; height: 44px; margin: 2px 2px 0 auto; border: 1.500px solid #c4c4c4; background: #f0f0f0; }
.toolbar { display: flex; align-items: center; height: 49px; padding-bottom: 2px; background: linear-gradient(#fdfdfd, #f0f0f0); color: #111; }
.toolbar .arrow { border-top-color: #000; margin-top: 4px; }
.toolbar .arrow.dim { border-top-color: #999; }
.bar { flex: none; width: 1.500px; height: 30px; background: #bdbdbd; }
.bar.first { margin-left: 7px; }
.m-preview { margin: 3px 10px 0 8px; }
.m-bar2 { margin-left: 13px; }
.m-tag { margin: 2px 0 0 10px; }
.m-layout { margin: 0 7px 0 16px; }
.m-medium { margin: 0 12px 0 20px; }
.m-page { margin: 0 9px 0 19px; color: #777; }
.m-bar3 { margin-left: 15px; }
.m-globe { margin: 2px 0 0 14px; }
.m-red { margin: 2px 0 0 14px; }
.tools2 { display: flex; align-items: center; margin-left: 465px; }
.tools2 svg { margin-top: 2px; }
.tools2 svg:first-child { margin-top: -6px; }
.tools2 .arrow { margin-left: 10px; }
.m-expand { margin-left: 12px; }
.m-collapse { margin-left: 14px; }
.m-bar4 { margin-left: 15px; }
.m-insert { margin-left: 10px; }

.editor { display: flex; height: 1174px; overflow: hidden; background: #fcfcfc; }
.rail { flex: none; width: 27px; border: 2px solid #a9a9a9; border-bottom: 0; background: #f9f9f9; }
.rail span, .tag span { display: block; writing-mode: vertical-rl; transform: rotate(180deg); font-size: 17.500px; line-height: 20px; color: #a2a2a2; }
.html { width: 28px; margin-top: 96px; }
.html span { margin: 7px 0 0 -1px; }
.bodytag { margin-top: 122px; border-left: 0; width: 26px; }
.bodytag span { margin: 5px 0 0 -1px; }
.tags { flex: none; width: 26px; }
.tag { border: 2px solid #a9a9a9; border-left: 0; background: #f9f9f9; overflow: hidden; }
.tag.on { background: #8cb8e6; }
.tag.on span { color: #222; }
.tag span { margin: 6px 0 0 0; }
.tag.head span { margin: 6px 0 0 -2px; }
.canvas { flex: 1; }
.markup { height: 91px; padding-left: 112px; font-size: 17.500px; line-height: 28px; color: #999; }
.sheetrow { display: flex; height: 1083px; margin-left: 88px; background: #fff; }
.sheet { flex: 1; padding: 78px 0 0 20px; color: #4a4a4c; font: 32px/37px "Liberation Sans", Arial, sans-serif; }
.sheet p { display: flex; height: 38px; margin: 0 0 56px; }
.copy { padding-left: 1px; width: 1085px; }
.copy.on { width: 162px; background: #549ef8; color: #fff; }
.tail.dot { margin-left: -6px; }
.scroll { display: flex; flex-direction: column; align-items: center; width: 29px; margin-right: 2px; padding-top: 12px; background: #f0f0f0; }
.thumb { width: 29px; height: 598px; margin-top: 10px; background: #cdcdcd; }
.down { margin: auto 0 10px; }

.status { display: flex; align-items: center; height: 51px; padding-bottom: 3px; background: linear-gradient(#fdfdfd, #f0f0f0); color: #111; }
.words { margin-left: 6px; }
.s1 { margin-left: 14px; }
.scale { margin-left: 10px; }
.s-down { margin-left: 21px; }
.toggle { flex: none; display: flex; align-items: center; justify-content: center; width: 46px; height: 44px; border: 2px solid #2f7ad1; background: #f2f7fc; }
.w100 { margin-left: 8px; }
.s-up { margin-left: 8px; }
.zoom { display: flex; align-items: center; width: 120px; height: 46px; margin-left: 10px; padding: 0 7px 0 7px; background: #fff; }
.zoom .arrow { margin-left: auto; border-top-color: #000; }
.s2 { margin-left: 9px; }
.s-pal { margin-left: 10px; }
.s3 { margin-left: 15px; }
.s4 { margin-left: 5px; }
.s5 { margin-left: -1px; }
.s6 { margin-left: 6px; }
.s7 { margin-left: 6px; }
.s8 { margin-left: 6px; }
.orange { width: 6px; height: 28px; margin-left: 11px; background: #e2a050; }
.modes { position: relative; display: flex; height: 41px; border-top: 2px solid #9a9a9a; background: linear-gradient(#ececec, #cccccc); font-size: 18.500px; line-height: 33px; }
.modes .shapes { top: -2px; }
.modes span { position: relative; }
.xml { margin-left: 46px; color: #111; }
.text { margin-left: 38px; color: #555; }
.corner { display: flex; gap: 4px; margin: 5px 18px 0 auto; }

.popup { position: absolute; left: 806px; top: 250px; width: 471px; height: 1510px; border: 2px solid #999; border-radius: 4px 4px 0 0; background: #fff; font: 24px/44px "Liberation Serif", "Times New Roman", serif; color: #000; }
.lip { height: 3px; border-bottom: 1.500px solid #999; background: #f0f0f0; }
.inner { display: flex; height: 1493px; }
.inner ul { flex: 1; margin: 0; padding: 10px 10px 0 12px; list-style: none; }
.inner li { display: flex; align-items: center; height: 44px; padding-left: 8px; }
.rail2 { display: flex; flex-direction: column; justify-content: space-between; align-items: center; width: 35px; padding: 13px 0 5px; background: #efefef; }
.box { border-radius: 4px; background: #c6c6c6; }
.reset { font-family: "Liberation Sans", Arial, sans-serif; font-size: 22.500px; line-height: 46px; }
.inner .reset { padding-top: 1px; }
.italic { font-style: italic; }
.filled span { line-height: 28px; background: #2a6180; }
.inner .h1 { height: 64px; font-size: 47px; font-weight: bold; color: #2a6480; }
.pin { margin: -2px 11px 0 auto; }
.inner .h2 { height: 48px; padding-top: 2px; font-size: 35px; font-weight: bold; }
.h3 { font-size: 28px; font-weight: bold; }
.inner .h4 { padding-bottom: 2px; font-size: 24px; font-weight: bold; }
.inner .h5 { padding-top: 1px; font-size: 20px; font-weight: bold; }
.h6 { font-size: 16.500px; font-weight: bold; }
.created { font-size: 18.500px; font-weight: bold; color: #45494d; }
.check { color: #fff; font-weight: bold; }
.check span { margin-top: -1px; font-size: 21.500px; line-height: 28px; background: radial-gradient(circle at 25% 25%, #fff 0 .900px, transparent 1.500px) 0 0 / 5.240px 5.240px, radial-gradient(circle at 75% 75%, #fff 0 .900px, transparent 1.500px) 0 0 / 5.240px 5.240px, #7c7c7c; }
.check.large span { font-size: 25px; line-height: 32px; }
.faint { font-size: 21.500px; font-weight: bold; color: #b9bcbf; }
.inner .title { height: 136px; font-size: 110px; line-height: 133px; padding-bottom: 0; }
.small { font-size: 18.500px; color: #3a3a3c; }
.mono { font-family: "Liberation Mono", "Courier New", monospace; font-size: 23.500px; }
</style>
